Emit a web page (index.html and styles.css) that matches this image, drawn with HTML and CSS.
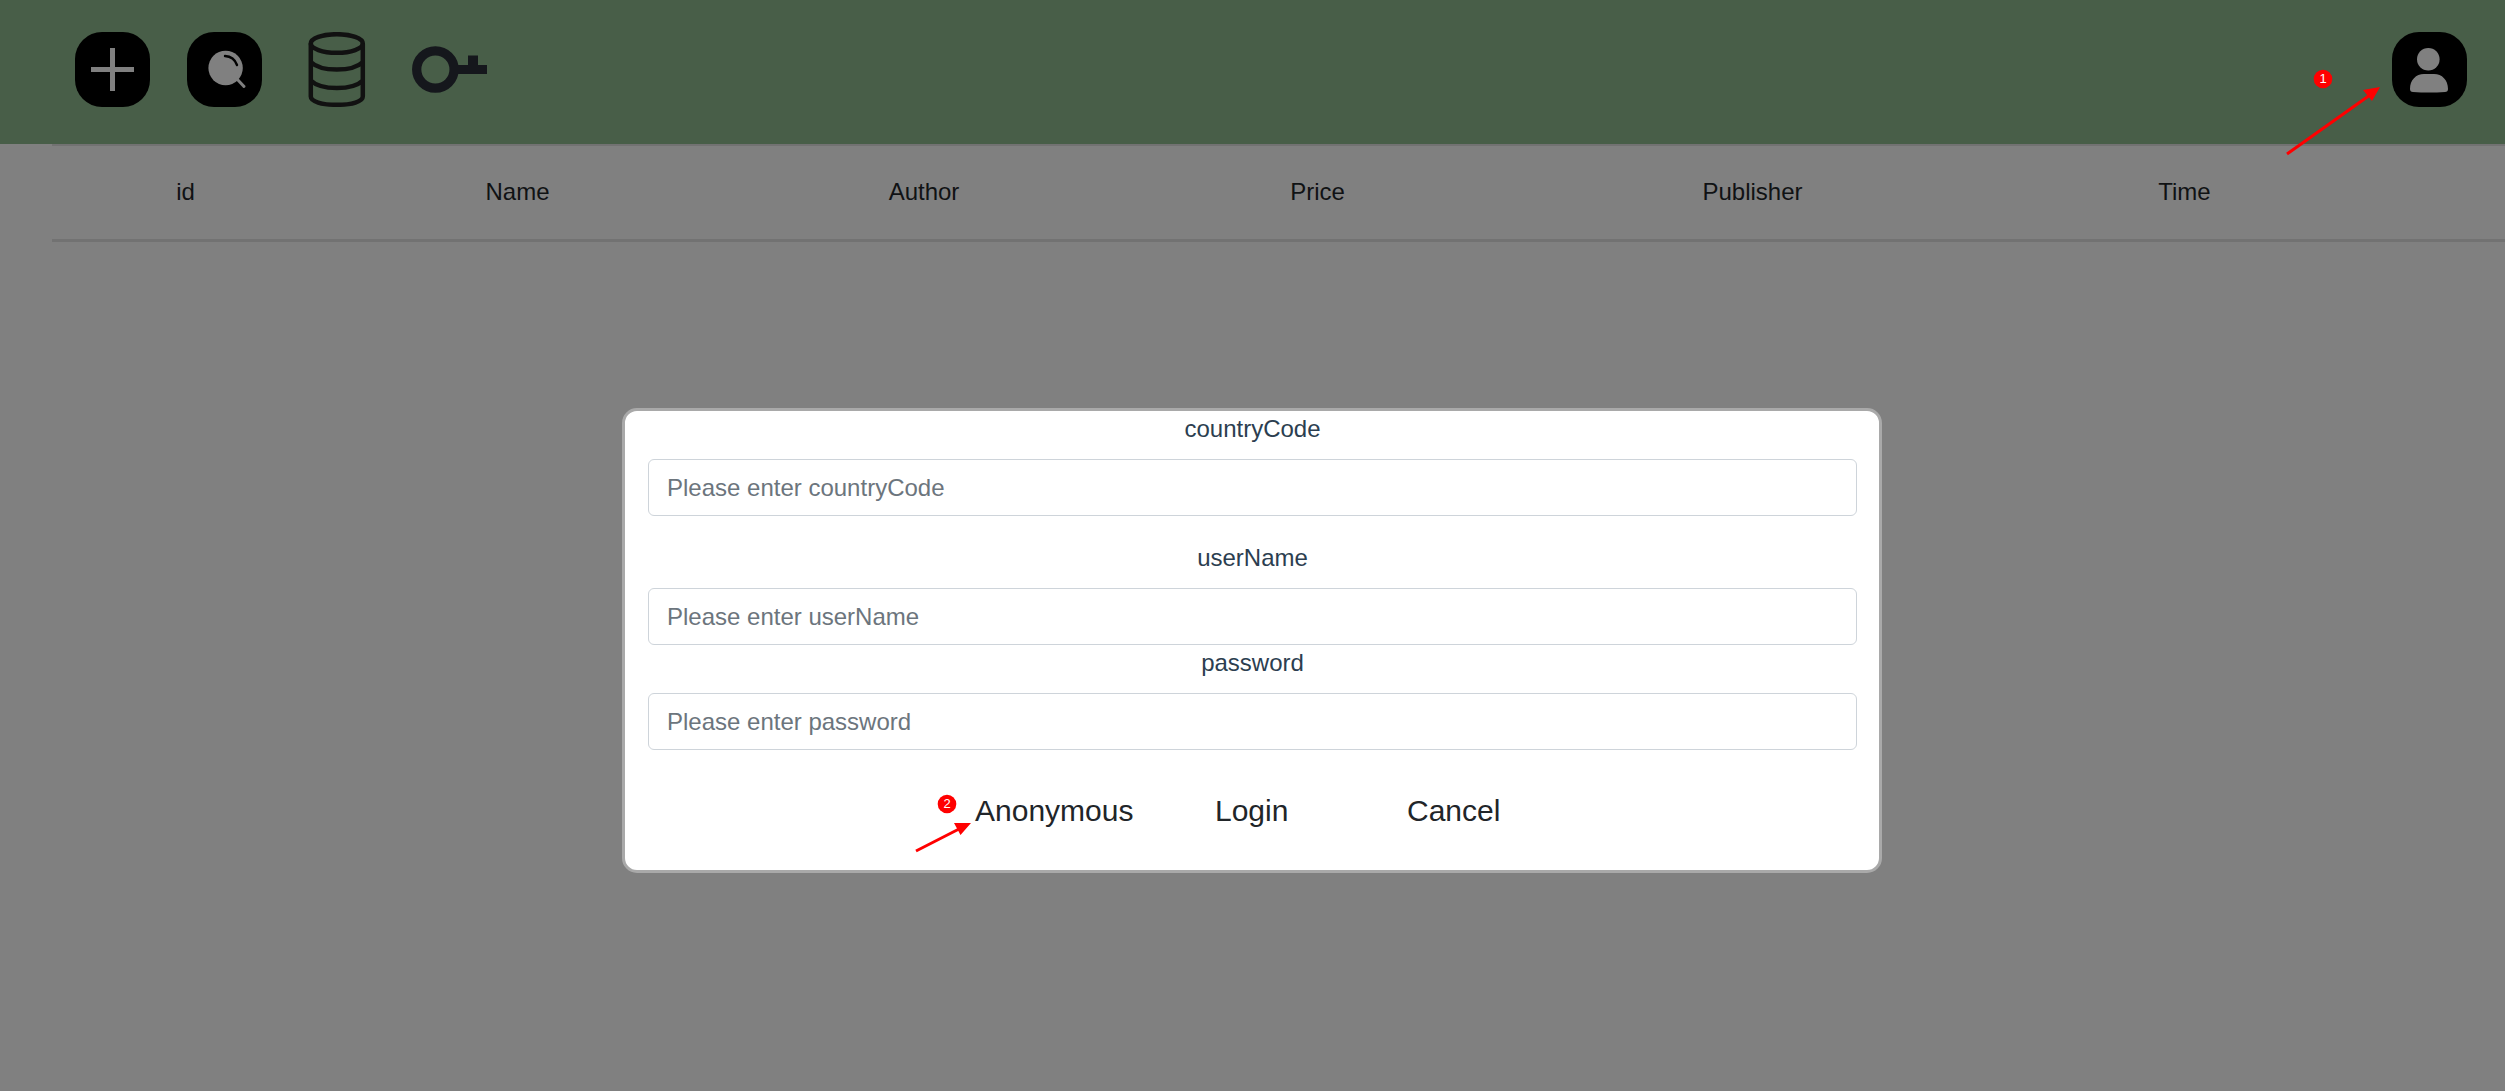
FILE: index.html
```html
<!DOCTYPE html>
<html lang="en">
<head>
<meta charset="utf-8">
<title>Books</title>
<link rel="stylesheet" href="styles.css">
</head>
<body>
<header class="toolbar">
  <svg class="icon" viewBox="0 0 75 75"><rect width="75" height="75" rx="27"/><path d="M37.5 16v43M16 37.5h43" stroke="#808080" stroke-width="5"/></svg>
  <svg class="icon" viewBox="0 0 75 75"><rect width="75" height="75" rx="27"/><circle cx="38.600" cy="36" r="17.200" fill="#808080"/><path d="M50 47l7 7.500" stroke="#808080" stroke-width="3" stroke-linecap="round"/><path d="M38 24q9 .5 12 9" fill="none" stroke="#000" stroke-width="2.400" stroke-linecap="round"/></svg>
  <svg class="icon" viewBox="0 0 75 75" fill="none" stroke="#111" stroke-width="4.500"><ellipse cx="37.800" cy="11.500" rx="26" ry="9.300"/><path d="M11.800 11.500v53c0 5 11 8.300 26 8.300s26-3.300 26-8.300v-53M11.800 30c5 5 15 7.500 26 7.500s21-2.500 26-7.500M11.800 48.500c5 5 15 7.500 26 7.500s21-2.500 26-7.500"/></svg>
  <svg class="icon" viewBox="0 0 75 75"><circle cx="23.400" cy="37.500" r="18.700" fill="none" stroke="#15171c" stroke-width="9.300"/><path d="M45 33h11v-9.500h10V33h9v9H45z" fill="#15171c"/></svg>
  <svg class="icon user" viewBox="0 0 75 75"><rect width="75" height="75" rx="27"/><circle cx="36.300" cy="27.300" r="11.300" fill="#808080"/><path d="M18 57c0-9 6-15 14-15h10c8 0 14 6 14 15 0 2-1 3-3 3q-16 1-32 0c-2 0-3-1-3-3z" fill="#808080"/></svg>
</header>
<main class="books">
  <span>id</span><span>Name</span><span>Author</span><span>Price</span><span>Publisher</span><span>Time</span>
</main>
<form class="dialog">
  <label for="cc">countryCode</label>
  <input id="cc" class="spaced" type="text" placeholder="Please enter countryCode">
  <label for="un">userName</label>
  <input id="un" type="text" placeholder="Please enter userName">
  <label for="pw">password</label>
  <input id="pw" type="password" placeholder="Please enter password">
  <div class="actions"><button type="button" class="anonymous">Anonymous</button><button type="button" class="login">Login</button><button type="button" class="cancel">Cancel</button></div>
</form>
<svg class="marks" viewBox="0 0 2505 1091">
  <g stroke="#f00" stroke-width="3"><path d="M2287 154L2370 95M916 851L959 829"/></g>
  <path d="M2380 87l-17 3 9 11zM971 823h-17l6.500 12z" fill="#f00"/>
  <circle cx="2323" cy="79" r="9.300" fill="#f00"/><circle cx="947" cy="804" r="9.300" fill="#f00"/>
  <text x="2323" y="83">1</text><text x="947" y="808">2</text>
</svg>
</body>
</html>
```
FILE: styles.css
```css
* { box-sizing: border-box; }
body {
  margin: 0;
  height: 1091px;
  overflow: hidden;
  background: #808080;
  color: #101214;
  font: 24px/36px "Liberation Sans", Arial, sans-serif;
}
.toolbar {
  display: flex;
  gap: 37.2px;
  height: 144px;
  padding: 32px 38px 0 75px;
  background: #485e48;
}
.icon { width: 75px; height: 75px; }
.user { margin-left: auto; }
.books {
  display: grid;
  grid-template-columns: 267px 397px 416px 371px 499px 365px;
  align-items: center;
  height: 98px;
  margin-left: 52px;
  padding-bottom: 2px;
  border-top: 2px solid #727272;
  border-bottom: 3px solid #727272;
  text-align: center;
}
.dialog {
  display: flex;
  flex-direction: column;
  width: 1260px;
  height: 465px;
  margin: 166px 0 0 622px;
  padding: 0 22px 0 23px;
  border: 3px solid #a9a9a9;
  border-radius: 15px;
  background: #fff;
}
label {
  margin-bottom: 12px;
  color: #2c3e50;
  text-align: center;
}
input {
  height: 57px;
  padding: 0 18px;
  border: 1px solid #ced4da;
  border-radius: 6px;
  background: #fff;
  font: inherit;
}
input::placeholder { color: #6c757d; opacity: 1; }
.spaced { margin-bottom: 24px; }
.actions {
  display: flex;
  margin: 38px 0 0 327px;
}
button {
  padding: 0;
  border: 0;
  background: none;
  color: #212529;
  font: 30px/45px "Liberation Sans", Arial, sans-serif;
  text-align: left;
}
.anonymous { width: 240px; }
.login { width: 192px; }
.marks {
  position: absolute;
  top: 0;
  left: 0;
  width: 2505px;
  height: 1091px;
  pointer-events: none;
}
.marks text {
  fill: #fff;
  font: 13px "Liberation Sans", Arial, sans-serif;
  text-anchor: middle;
}
```
